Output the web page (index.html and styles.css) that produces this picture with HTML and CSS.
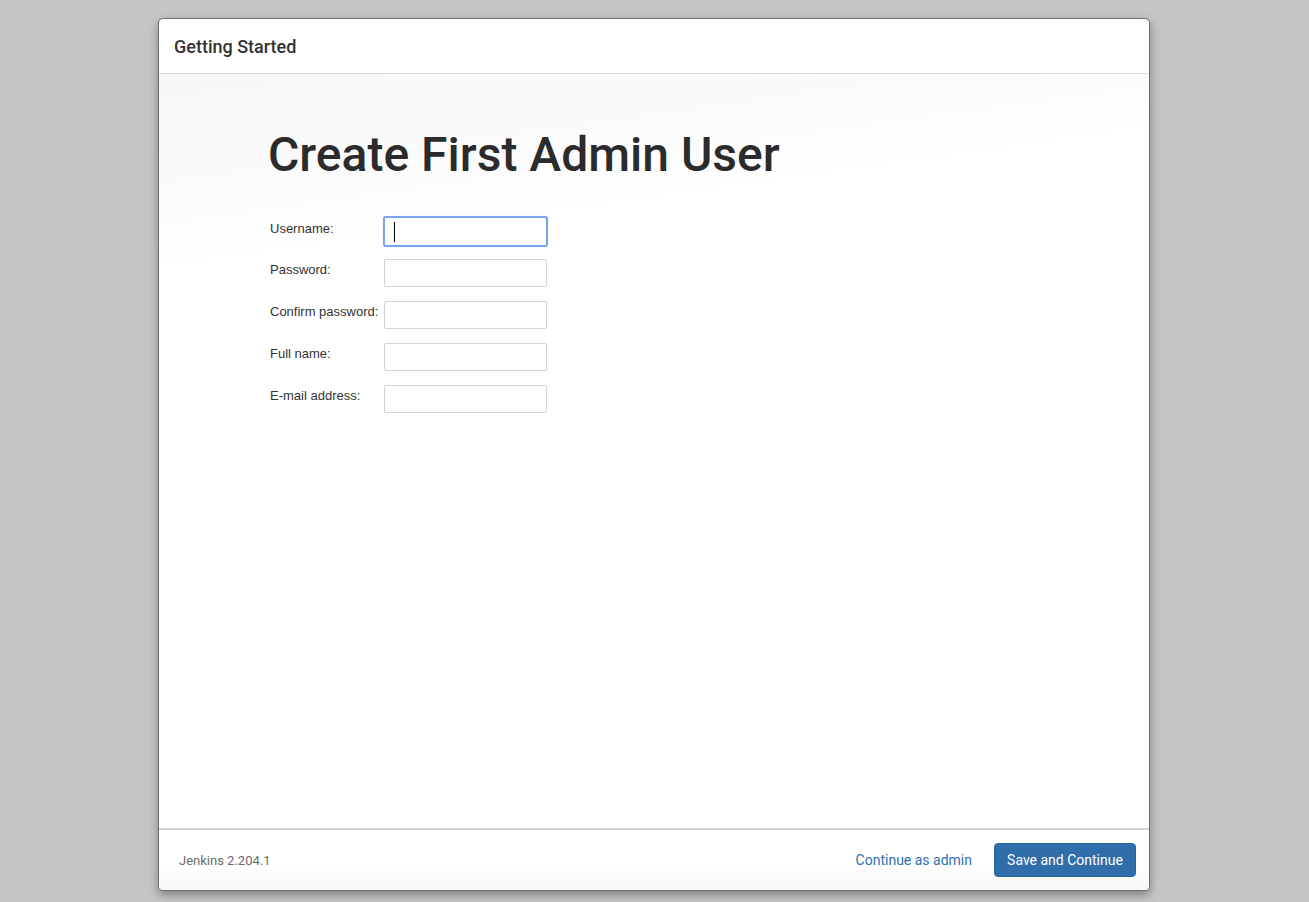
FILE: index.html
```html
<!DOCTYPE html>
<html>
<head>
<meta charset="utf-8">
<link rel="stylesheet" href="styles.css">
</head>
<body>
<div class="window">
  <div class="header">Getting Started</div>
  <div class="content">
    <h1 class="title">Create First Admin User</h1>
    <div class="form">
      <label class="lbl">Username:</label>
      <div class="field focused"><span class="caret"></span></div>
      <label class="lbl">Password:</label>
      <div class="field"></div>
      <label class="lbl">Confirm password:</label>
      <div class="field"></div>
      <label class="lbl">Full name:</label>
      <div class="field"></div>
      <label class="lbl">E-mail address:</label>
      <div class="field"></div>
    </div>
  </div>
  <div class="footer">
    <span class="version">Jenkins 2.204.1</span>
    <div class="actions">
      <a class="link">Continue as admin</a>
      <button class="btn">Save and Continue</button>
    </div>
  </div>
</div>
</body>
</html>
```

FILE: styles.css
```css
html, body {
  margin: 0;
  padding: 0;
  background: #c5c5c5;
  height: 100%;
}
body {
  padding: 18px 0 0 158px;
  box-sizing: border-box;
  font-family: Roboto, "Liberation Sans", sans-serif;
}
.window {
  width: 992px;
  height: 873px;
  box-sizing: border-box;
  background: #fff;
  border: 1px solid #6e6e6e;
  border-radius: 5px;
  box-shadow: 0 4px 10px rgba(0,0,0,0.35);
  display: flex;
  flex-direction: column;
  overflow: hidden;
}
.header {
  height: 55px;
  flex: none;
  box-sizing: border-box;
  border-bottom: 1px solid #dcdcdc;
  padding: 17px 0 0 15px;
  font-size: 18px;
  font-weight: 500;
  color: #333;
}
.content {
  flex: 1;
  background: linear-gradient(172deg, #f7f7f7 0%, #fafafa 12%, #ffffff 22%, #ffffff 100%);
  padding: 51px 0 0 109px;
}
.title {
  margin: 0 0 33px 0;
  font-size: 48px;
  font-weight: 500;
  color: #2b2b2b;
  line-height: 60px;
}
.form {
  display: grid;
  grid-template-columns: 114px 163px;
  row-gap: 14px;
  margin-left: 2px;
  font-family: "Liberation Sans", Arial, sans-serif;
}
.lbl {
  font-size: 13px;
  color: #333;
  padding-top: 3px;
}
.field {
  height: 28px;
  box-sizing: border-box;
  border: 1px solid #d4d4d4;
  border-radius: 2px;
  background: #fff;
  position: relative;
}
.field.focused {
  border: 2px solid #7ba4ee;
  border-radius: 3px;
  margin: -2px -1px;
  height: 31px;
  box-shadow: 0 0 1px #a9c4f5;
}
.caret {
  position: absolute;
  left: 9px;
  top: 4px;
  width: 1px;
  height: 20px;
  background: #000;
}
.footer {
  height: 62px;
  flex: none;
  box-sizing: border-box;
  border-top: 2px solid #d3d3d3;
  background: linear-gradient(#fff 60%, #f7f7f7);
  display: flex;
  align-items: center;
  justify-content: space-between;
  padding: 0 13px 0 20px;
}
.version {
  font-size: 13px;
  color: #6b6b6b;
}
.actions {
  display: flex;
  align-items: center;
  gap: 22px;
}
.link {
  font-size: 14px;
  color: #2f6faf;
  cursor: pointer;
}
.btn {
  height: 34px;
  width: 142px;
  border: 1px solid #2a65a0;
  border-radius: 4px;
  background: #2f6dab;
  color: #fff;
  font-family: Roboto, "Liberation Sans", sans-serif;
  font-size: 14px;
  padding: 0;
}
```
